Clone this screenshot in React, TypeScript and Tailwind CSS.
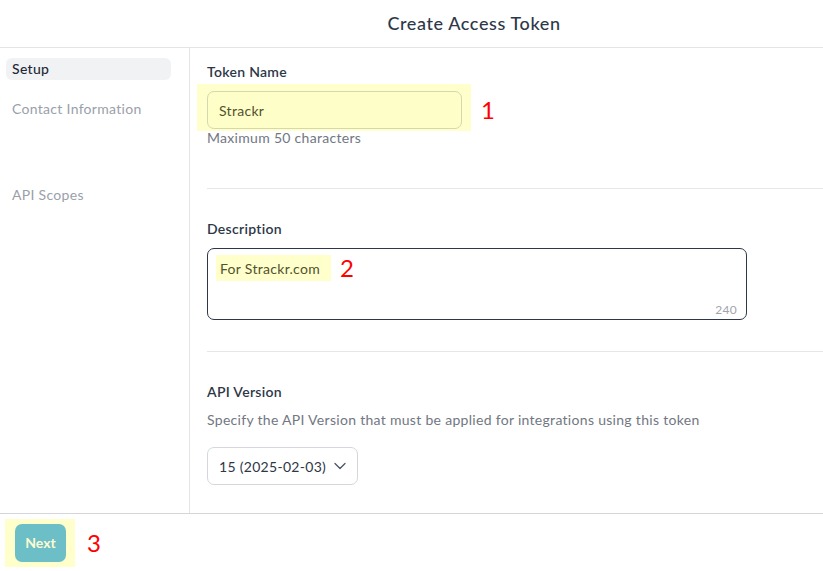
import React from "react";

export default function App() {
  return (
    <div
      className="flex h-[571px] w-[823px] flex-col overflow-hidden bg-white text-[14px] tracking-[0.3px] text-[#2d3748]"
      style={{ fontFamily: "Lato, 'Noto Sans', sans-serif" }}
    >
      <header className="flex h-[48px] shrink-0 items-center justify-center border-b border-[#e2e4e8] pl-[125px]">
        <h1 className="text-[18px] font-medium tracking-[0.6px] text-[#2d3748]">Create Access Token</h1>
      </header>

      <div className="flex min-h-0 flex-1">
        <nav className="flex w-[190px] shrink-0 flex-col border-r border-[#e2e4e8] pl-[6px] pr-[18px] pt-[10px]">
          <div className="h-[22px] rounded-[6px] bg-[#f1f2f4] px-[6px] leading-[22px] font-medium text-[#1f2937]">
            Setup
          </div>
          <div className="mt-[19px] px-[6px] leading-5 text-[#9aa0a9]">Contact Information</div>
          <div className="mt-[66px] px-[6px] leading-5 text-[#9aa0a9]">API Scopes</div>
        </nav>

        <main className="flex flex-1 flex-col pl-[17px] pt-[14px]">
          <label className="leading-5 font-semibold text-[#2d3748]">Token Name</label>
          <div className="mt-[9px] flex items-center">
            <div className="relative">
              <span className="pointer-events-none absolute -bottom-[2px] -left-[10px] -right-[9px] -top-[7px] bg-[#ffffcc]" />
              <div className="relative flex h-[38px] w-[255px] items-center rounded-[7px] border border-[#d6d6b0] bg-[#fefec8] px-[11px] text-[#52522f]">
                Strackr
              </div>
            </div>
            <span className="ml-[19px] text-[24px] leading-none text-[#ff0000]">1</span>
          </div>
          <p className="leading-[18px] text-[#727782]">Maximum 50 characters</p>

          <div className="mt-[41px] h-px bg-[#e5e7eb]" />

          <label className="mt-[30px] leading-5 font-semibold text-[#2d3748]">Description</label>
          <div className="relative mt-[9px] h-[72px] w-[540px] rounded-[7px] border border-[#2d3748] px-[8px] pt-[6px]">
            <div className="flex items-center">
              <span className="flex h-[26px] w-[115px] items-center bg-[#ffffcc] pl-[4px] text-[#52522f]">
                For Strackr.com
              </span>
              <span className="ml-[9px] text-[24px] leading-none text-[#ff0000]">2</span>
            </div>
            <span className="absolute bottom-[1px] right-[9px] text-[12px] leading-4 text-[#a0a5ad]">240</span>
          </div>

          <div className="mt-[31px] h-px bg-[#e5e7eb]" />

          <label className="mt-[30px] leading-5 font-semibold text-[#2d3748]">API Version</label>
          <p className="mt-[8px] leading-5 text-[#727782]">
            Specify the API Version that must be applied for integrations using this token
          </p>
          <div className="mt-[17px] flex h-[38px] w-[151px] items-center justify-between rounded-[7px] border border-[#d4d7dc] pl-[11px] pr-[11px] text-[#2d3748]">
            <span>15 (2025-02-03)</span>
            <svg width="12" height="8" viewBox="0 0 12 8" fill="none" stroke="#4a5568" strokeWidth="1.3" strokeLinecap="round" strokeLinejoin="round">
              <path d="M1 1.5 L6 6.5 L11 1.5" />
            </svg>
          </div>
        </main>
      </div>

      <footer className="flex h-[58px] shrink-0 items-center border-t border-[#d4d6da] pl-[5px]">
        <div className="flex h-[48px] w-[70px] items-center bg-[#ffffcc] pl-[10px]">
          <button className="h-[38px] w-[51px] rounded-[7px] bg-[#6cbfc6] text-[14px] font-bold tracking-normal text-[#fdfbd2]">
            Next
          </button>
        </div>
        <span className="ml-[12px] text-[24px] leading-none text-[#ff0000]">3</span>
      </footer>
    </div>
  );
}
